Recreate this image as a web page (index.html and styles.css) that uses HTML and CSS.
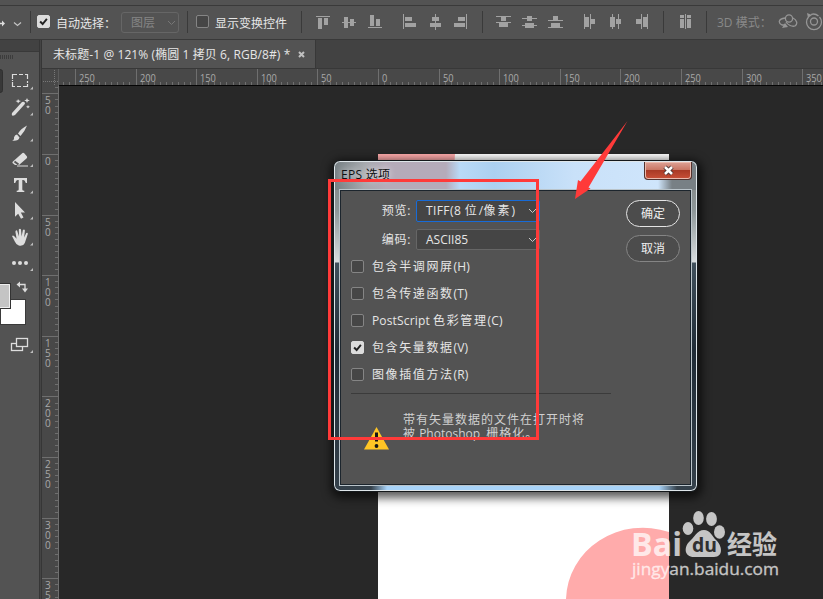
FILE: index.html
```html
<!DOCTYPE html>
<html lang="zh-CN">
<head>
<meta charset="utf-8">
<title>EPS 选项</title>
<link rel="stylesheet" href="styles.css">
</head>
<body>
<div class="app">
  <div class="menu-strip"></div>
  <header class="options">
    <div class="seg seg-tool">
      <svg width="30" height="33"><path d="M0 17.5h3" stroke="#ddd" stroke-width="1.5"/><path d="M2 14.5l3 3-3 3z" fill="#ddd"/><path d="M14 16.500l3.500 3 3.500-3" fill="none" stroke="#c4c4c4" stroke-width="1.200"/></svg>
    </div>
    <div class="seg seg-auto">
      <span class="check on"><svg viewBox="0 0 13 13"><path d="M2.500 6.500l3 3 5-6" fill="none" stroke="#222" stroke-width="2.300"/></svg></span>
      <span class="bar-text auto-text">自动选择：</span>
      <span class="layer-select">图层<svg width="9" height="6"><path d="M1 1l3.500 3.500L8 1" fill="none" stroke="#777"/></svg></span>
    </div>
    <div class="seg seg-transform"><span class="check"></span><span class="bar-text">显示变换控件</span></div>
    <div class="seg seg-align">
      <svg width="180" height="33" fill="#a2a2a2">
        <path d="M14 10h14v1H14zM16 12h4v11h-4zM22 12h4v7h-4zM40 16h14v1H40zM42 11h4v11h-4zM48 13h4v7h-4zM66 21h14v1H66zM68 9h4v11h-4zM74 13h4v7h-4zM101 8h1v15h-1zM103 11h7v4h-7zM103 17h11v4h-11zM133 8h1v16h-1zM130 11h7v4h-7zM128 17h11v4h-11zM164 8h1v15h-1zM156 11h7v4h-7zM152 17h11v4h-11z"/>
      </svg>
    </div>
    <div class="seg seg-distribute">
      <svg width="180" height="33" fill="#a2a2a2">
        <path d="M13 10h15v1H13zM18 11h5v4h-5zM13 16h15v1H13zM16 17h9v4h-9zM39 12h15v1H39zM44 10h5v5h-5zM39 19h15v1H39zM42 17h9v5h-9zM65 14h15v1H65zM70 10h5v4h-5zM65 21h15v1H65zM68 17h9v4h-9zM101 8h1v15h-1zM102 11h4v10h-4zM107 8h1v15h-1zM108 13h4v5h-4zM129 8h1v15h-1zM127 11h5v10h-5zM135 8h1v15h-1zM133 13h5v5h-5zM158 8h1v15h-1zM153 13h5v5h-5zM164 8h1v15h-1zM160 11h4v10h-4z"/>
      </svg>
    </div>
    <div class="seg seg-auto-align"><svg width="42" height="33" fill="#a2a2a2"><path d="M16 9h4v3h-4zM23 9h4v3h-4zM16 13h4v9h-4zM23 13h4v9h-4zM21 8h1v15h-1z"/></svg></div>
    <div class="seg seg-3d">
      <span class="mode">3D 模式：</span>
      <svg width="45" height="33" viewBox="778 6 45 33" fill="none" stroke="#969696" stroke-width="1.300"><circle cx="789" cy="18.500" r="3.600"/><path d="M785 18c-7 1-7 5-3 7h3M793 18c4 2 5 6 2 8-3 1-7-1-9-4"/><path d="M785 23l-3 5 6-1z" fill="#969696" stroke="none"/><circle cx="814" cy="21.500" r="3.500"/><path d="M808.500 17a7.500 7.500 0 1 0 11 0M811 14.500q4-1.500 7.500 1.500"/><path d="M807 13l1 5 4-3z" fill="#969696" stroke="none"/></svg>
    </div>
  </header>

  <div class="workspace">
    <aside class="tools">
      <div class="tools-head"></div>
      <svg class="tool-icons" width="39" height="547" viewBox="0 52 39 547">
        <path d="M0 57h13" stroke="#3c3c3c" stroke-width="4" stroke-dasharray="1 1"/>
        <path d="M-4 69.500H0q2.500 0 2.500 2v19q0 2-2.500 2h-4z" fill="#383838" stroke="#303030"/>
        <path d="M12.500 79v-4.500H17M19 74.500h4M25 74.500h2.500V79M27.500 81v2M27.500 84v2.500H23M21 86.500h-4M15 86.500h-2.500V82M12.500 80v1" fill="none" stroke="#ddd" stroke-width="1.200"/>
        <g fill="#ddd">
          <path d="M12 113l10-11q2-1 3 1 0 1-1 2l-9 10q-4 2-3-2zM18 99l1 1.500 2 .5-2 1-1 1.500-.5-1.500-2-1 2-.5zM27 98l.8 1.700 2 .8-2 .8-.8 1.700-.8-1.700-2-.8 2-.8zM28 105l.6 1.200 1.400.6-1.400.6-.6 1.200-.6-1.200-1.400-.6 1.400-.6z"/>
          <path d="M27 125.500q-6 3-9 8l2.500 2.500q4-4 6.500-10.500zM17 134.500l2.500 3q-1 4-7.500 3.200 2.500-1 2-3.500 1-2.500 3-2.700z"/>
          <path d="M13.500 161l9-8q1-.5 2 .5l2.500 3q.5 1-.5 2L19 165h-4l-2.500-2q-.5-1 1-2z"/>
          <path d="M17 165.400h11v1H17zM14 178h13v5h-1.200q-.8-3-2.500-3h-1v9.500q0 1.200 2 1.300v1.200h-7.600v-1.200q2-.1 2-1.300V180h-1q-1.700 0-2.500 3H14z"/>
          <path d="M15 202l10 10.500h-4.200l2.700 5-2.500 1.300-2.800-5-3.200 3z"/>
          <path d="M12 236q1-1.300 2.300.2l2.300 2.500-1.200-7q0-1.700 1.600-1.500l2 6.300-.2-7q1.200-1.500 2.200 0l.6 7 1.300-6.500q1.400-1.200 2 .4l-.8 7 2.200-4.500q1.600-.8 1.500 1l-3 9q-1.500 3.600-6 2.600-2.500-.5-4-4z"/>
          <circle cx="14" cy="263" r="2"/><circle cx="20" cy="263" r="2"/><circle cx="26" cy="263" r="2"/>
        </g>
        <path d="M14.500 161.500l4 3" stroke="#555" stroke-width="2"/>
        <g fill="#bdbdbd"><path d="M33 86.500v3h-3zM33 112.500v3h-3zM33 138.500v3h-3zM33 164v3h-3zM33 190.500v3h-3zM33 216.500v3h-3zM33 242.500v3h-3zM33 268v3h-3zM33 350v3h-3z"/></g>
        <path d="M19 284.500h6V290" fill="none" stroke="#ddd" stroke-width="1.300"/><path d="M20 281.500v6l-3.500-3zM22 288.500h6l-3 4z" fill="#ddd"/>
        <rect x="0.500" y="299.500" width="25" height="25" fill="#fff" stroke="#3a3a3a"/>
        <rect x="-5" y="283.500" width="15.500" height="25" fill="#c4c4c4" stroke="#333"/><path d="M0 284.500h9.500v23H0" fill="none" stroke="#eee"/>
        <g fill="#4f4f4f" stroke="#ddd" stroke-width="1.300"><rect x="11.500" y="343.500" width="11" height="7"/><rect x="16.500" y="338.500" width="11" height="8"/></g>
      </svg>
    </aside>
    <div class="gutter"></div>
    <main class="document">
      <nav class="tabs"><div class="tab"><span class="tab-title">未标题-1 @ 121% (椭圆 1 拷贝 6, RGB/8#) *</span><svg width="7" height="7"><path d="M1 1l5 5M6 1L1 6" stroke="#c0c0c0" stroke-width="2"/></svg></div></nav>
      <svg class="ruler-x" id="ruler-x" width="781" height="17" viewBox="42 69 781 17"></svg>
      <div class="canvas-row">
        <svg class="ruler-y" id="ruler-y" width="17" height="513" viewBox="42 86 17 513"></svg>
        <div class="canvas">
          <svg width="764" height="513" viewBox="59 86 764 513"><path d="M378 154h291v445H378z" fill="#fff"/><path d="M378 154h77q0 34-34 60h-43zM566 599a77 73 0 0 1 103-67v67z" fill="#ffabab"/></svg>
        </div>
      </div>
    </main>
  </div>

  <section class="dialog">
    <div class="titlebar"><span class="caption">EPS 选项</span><span class="close"><svg width="13" height="11"><path d="M3 2l7 7M10 2L3 9" stroke="#4b3434" stroke-width="4.500"/><path d="M3 2l7 7M10 2L3 9" stroke="#fff" stroke-width="2.500"/></svg></span></div>
    <div class="client">
      <div class="form">
        <div class="field"><label class="preview-label">预览:</label><span class="select active"><span class="preview-value">TIFF(8 <b>位</b>/<b>像素</b>)</span><svg width="9" height="6"><path d="M1 1l3.500 3.500L8 1" fill="none" stroke="#c8c8c8"/></svg></span></div>
        <div class="field second"><label>编码:</label><span class="select"><span>ASCII85</span><svg width="9" height="6"><path d="M1 1l3.500 3.500L8 1" fill="none" stroke="#c8c8c8"/></svg></span></div>
        <div class="choices">
          <div class="choice"><span class="check"></span><span class="choice-text"><b>包含半调网屏</b>(H)</span></div>
          <div class="choice"><span class="check"></span><span class="choice-text"><b>包含传递函数</b>(T)</span></div>
          <div class="choice"><span class="check"></span><span class="choice-text">PostScript <b>色彩管理</b>(C)</span></div>
          <div class="choice"><span class="check on"><svg viewBox="0 0 13 13"><path d="M2.500 6.500l3 3 5-6" fill="none" stroke="#222" stroke-width="2.300"/></svg></span><span class="choice-text"><b>包含矢量数据</b>(V)</span></div>
          <div class="choice"><span class="check"></span><span class="choice-text"><b>图像插值方法</b>(R)</span></div>
        </div>
        <div class="note">
          <svg width="25" height="23"><path d="M12.500 0L25 22.500H0z" fill="#ffc525"/><path d="M12.500 5.500v9" stroke="#161616" stroke-width="3"/><circle cx="12.500" cy="19" r="1.900" fill="#161616"/></svg>
          <div class="note-text"><div><b>带有矢量数据的文件在打开时将</b></div><div><b>被</b> <span class="product">Photoshop</span> <b>栅格化。</b></div></div>
        </div>
      </div>
      <div class="buttons"><button class="ok">确定</button><button>取消</button></div>
    </div>
  </section>

  <div class="mark-box"></div>
  <svg class="arrow" width="56" height="80" viewBox="573 120 56 80"><path d="M627.500 121L588.500 187.500l2 1L575 199l3-19 2.500 1.500z" fill="#ff3a39"/></svg>
  <svg class="watermark" width="155" height="75" viewBox="628 508 155 75" fill="#fff">
    <g opacity=".73">
      <text x="631" y="555.500" font-size="32" font-weight="700" textLength="51" lengthAdjust="spacingAndGlyphs">Bai</text>
      <ellipse cx="688" cy="528.500" rx="5.300" ry="6.500"/><ellipse cx="698.500" cy="518" rx="5.300" ry="7"/><ellipse cx="711.500" cy="519" rx="5.400" ry="7"/><ellipse cx="719.500" cy="532" rx="5.500" ry="6.700"/>
      <path d="M704 530c6 0 8 6 12 10 6 5 8 17-2 17H694c-10 0-10-10-5-15 5-4 8-12 15-12z"/>
      <text class="cjk" x="727" y="554" font-size="26" font-weight="700" textLength="50" lengthAdjust="spacingAndGlyphs">经验</text>
      <text x="632" y="575" font-size="17" stroke="#fff" stroke-width=".3" textLength="147" lengthAdjust="spacingAndGlyphs">jingyan.baidu.com</text>
    </g>
    <text x="692" y="552" font-size="20" font-weight="700" fill="#303030" textLength="25" lengthAdjust="spacingAndGlyphs">du</text>
  </svg>
</div>
<script src="rulers.js"></script>
</body>
</html>
```
FILE: styles.css
```css
* { box-sizing: border-box; }
body { margin: 0; background: #282828; font: 12px/16px "Open Sans", "Noto Sans CJK SC", sans-serif; color: #e6e6e6; overflow: hidden; }
svg { display: block; flex: none; }
b { font-weight: 400; }
.app { position: relative; width: 823px; height: 599px; display: flex; flex-direction: column; overflow: hidden; }
.menu-strip { height: 6px; background: #535353; border-bottom: 1px solid #3a3a3a; flex: none; }
.options { height: 34px; flex: none; display: flex; background: #535353; border-bottom: 1px solid #393939; }
.seg { display: flex; align-items: center; flex: none; background: linear-gradient(#3a3a3a, #3a3a3a) 0 5px / 1px 22px no-repeat; white-space: nowrap; }
.seg-tool { width: 30px; background: none; }
.seg-auto { width: 157px; padding-left: 7px; }
.seg-transform { width: 114px; padding-left: 9px; }
.seg-align { width: 181px; padding-left: 1px; }
.seg-distribute { width: 181px; padding-left: 1px; }
.seg-auto-align { width: 43px; padding-left: 1px; }
.seg-3d { width: 117px; padding-left: 11px; }
.mode { width: 61px; color: #898989; }
.check { width: 13px; height: 13px; flex: none; border: 1px solid #858585; border-radius: 2px; background: #464646; }
.check.on { background: #dcdcdc; border-color: #dcdcdc; }
.check.on svg { width: 11px; height: 11px; }
.options .check { margin-bottom: 2px; }
.bar-text { margin: 2px 0 0 6px; }
.auto-text { width: 65px; }
.layer-select { width: 58px; height: 21px; display: flex; justify-content: space-between; align-items: center; padding: 0 2px 0 9px; border: 1px solid #666; border-radius: 3px; color: #858585; }
.workspace { display: flex; flex: 1; min-height: 0; }
.tools { width: 39px; background: #535353; }
.tools-head { height: 12px; background: #424242; border-bottom: 1px solid #393939; }
.gutter { width: 3px; background: #444; border-left: 1px solid #363636; border-right: 1px solid #363636; }
.document { width: 781px; }
.tabs { height: 29px; background: #424242; border-bottom: 1px solid #383838; }
.tab { width: 274px; height: 28px; display: flex; align-items: center; padding-left: 11px; background: #535353; border-right: 1px solid #383838; }
.tab-title { width: 245px; white-space: nowrap; letter-spacing: .09px; padding-top: 1px; }
.canvas-row { display: flex; }
.ruler-x, .ruler-y { background: #484848; font-size: 10px; fill: #a9a9a9; }
.canvas { background: #282828; }

.dialog { position: absolute; left: 333px; top: 160px; width: 365px; height: 332px; border: 1px solid #14181b; border-radius: 7px; padding: 1px 6px 6px; display: flex; flex-direction: column; box-shadow: inset 0 0 0 1px #dfe6ea, 1px 3px 10px 3px rgba(0,0,0,.65);
  background:
    linear-gradient(90deg, #747e82 0, #a6a9ae 30px, #b5abb9 52px, #b5abba 112px, #b9daf7 126px, #acd0f0 160px, #c9e1f9 240px, #cfe5fb 324px, #788085 338px) 0 0 / 100% 29px no-repeat,
    linear-gradient(90deg, #35414b 37px, #a8d3f8 53px, #a8d3f8 325px, #35414b 343px) 0 100% / 100% 7px no-repeat,
    linear-gradient(#808080 0, #8d9799 50px, #d8dddf 101px, #40505c 102px, #202c37 190px, #35414b 100%); }
.titlebar { height: 28px; flex: none; display: flex; align-items: flex-start; }
.caption { color: #101010; margin: 5px 0 0 1px; flex: 1; text-shadow: 0 0 7px #fff; letter-spacing: .3px; }
.close { width: 48px; height: 18px; margin-right: -1px; border: 1px solid #53332f; border-top: 0; border-radius: 0 0 4px 4px; display: flex; align-items: center; justify-content: center; box-shadow: inset 0 0 0 1px #eabaae; background: linear-gradient(#dda296, #ca7765 45%, #a93a26 50%, #c95038); }
.client { flex: 1; display: flex; background: #535353; border: 1px solid #1c252d; outline: 1px solid #bac4ca; padding: 0 10px 0 10px; }
.form { width: 260px; }
.field { display: flex; height: 22px; margin-top: 9px; }
.field label { width: 65px; padding-right: 5px; text-align: right; line-height: 22px; letter-spacing: .7px; }
.field.second { margin-top: 7px; height: 21px; }
.select { width: 124px; border: 1px solid #666; border-radius: 2px; background: #454545; display: flex; align-items: center; justify-content: space-between; padding: 0 2px 0 9px; }
.select.active { border-color: #176bd8; }
.preview-value { letter-spacing: .4px; white-space: nowrap; }
.preview-value b { letter-spacing: 2px; }
.choices { margin-top: 3px; height: 141px; border-bottom: 1px solid #3b3b3b; }
.choice { display: flex; align-items: center; height: 27px; }
.choice .check { margin-bottom: 1px; }
.choice-text { margin-left: 8px; white-space: nowrap; letter-spacing: .15px; }
.choice b { letter-spacing: 1.6px; }
.note { display: flex; margin: 19px 0 0 13px; }
.note svg { margin-top: 14px; }
.note-text { margin-left: 14px; line-height: 14px; color: #d0d0d0; white-space: nowrap; }
.note-text b { letter-spacing: 1px; }
.product { margin-right: 3px; }
.buttons { margin-left: 15px; padding-top: 9px; width: 54px; flex: none; }
.buttons button { display: block; width: 54px; height: 27px; margin: 0 0 8px; padding: 0; border: 1px solid #858585; border-radius: 14px; background: #4c4c4c; color: #eee; font: inherit; }
.buttons .ok { border-color: #e4e4e4; }

.mark-box { position: absolute; left: 328px; top: 179px; width: 211px; height: 261px; border: 3px solid #ff3a39; }
.arrow { position: absolute; left: 573px; top: 120px; }
.watermark { position: absolute; left: 628px; top: 508px; }
.watermark .cjk { font-family: "Noto Sans CJK SC", sans-serif; }
```
FILE: rulers.js
```javascript
// Rulers: one labelled division every 60.6px, split into ten small ticks.
const STEP = 60.62;
const line = (x, y, w, h) => `<path d="M${x} ${y}h${w}v${h}h${-w}z" fill="#6f6f6f"/>`;

let across = '';
for (let i = -55; i < 75; i++) {
  const x = Math.round(378 + i * STEP / 10);
  if (x < 61) continue;
  const major = i % 10 === 0;
  across += line(x, major ? 69 : 82, 1, major ? 16 : 3);
  if (major) {
    const label = String(Math.abs(i * 5));
    across += `<text x="${x + 4}" y="82" textLength="${5.3 * label.length}" lengthAdjust="spacingAndGlyphs">${label}</text>`;
  }
}
across += '<path d="M43 81.5h15M54.500 70v15" stroke="#777" stroke-dasharray="1 1"/>';
across += '<path d="M58 69h1v17h-1z" fill="#5c5c5c"/><path d="M59 85h764v1H59z" fill="#050505"/>';
document.getElementById('ruler-x').innerHTML = across;

let side = '';
for (let i = -11; i < 75; i++) {
  const y = Math.round(154 + i * STEP / 10);
  const major = i % 10 === 0;
  side += line(major ? 42 : 55, y, major ? 16 : 3, 1);
  if (major) {
    [...String(Math.abs(i * 5))].forEach((digit, n) => {
      side += `<text x="45" y="${y + 11 + n * 10}">${digit}</text>`;
    });
  }
}
side += '<path d="M58 86h1v513h-1z" fill="#6f6f6f"/>';
document.getElementById('ruler-y').innerHTML = side;
```
